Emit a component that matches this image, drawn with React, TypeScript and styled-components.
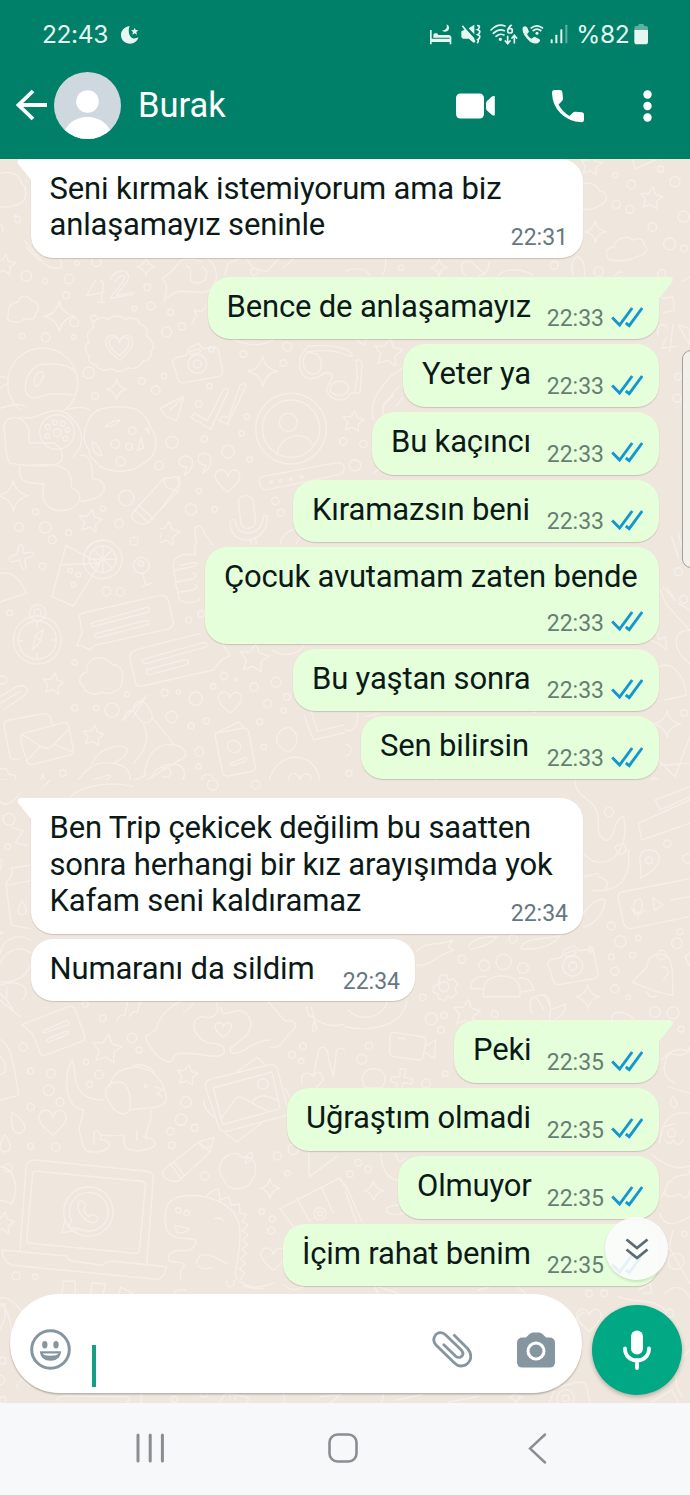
import React from 'react';
import styled, { createGlobalStyle } from 'styled-components';

const GlobalStyle = createGlobalStyle`
  html, body { margin: 0; padding: 0; }
  body { font-family: Roboto, 'Noto Sans', sans-serif; background: #efe6dd; }
  * { box-sizing: border-box; }
  svg { display: block; }
`;

const Screen = styled.div`
  position: relative;
  display: flex;
  flex-direction: column;
  width: 690px;
  height: 1495px;
  overflow: hidden;
`;

/* ---------- header ---------- */

const Header = styled.header`
  position: relative;
  z-index: 2;
  flex: none;
  height: 159px;
  background: #008069;
  color: #fff;
`;

const StatusBar = styled.div`
  display: flex;
  align-items: center;
  height: 68px;
  padding: 0 42px 0 42px;
  color: #e6f7f2;
  font: 400 24.5px/30px Inter, sans-serif;
`;

const Clock = styled.span`
  width: 79px;
  letter-spacing: -0.4px;
`;

const StatusIcons = styled.div`
  display: flex;
  align-items: center;
  margin-left: auto;
`;

const Battery = styled.span`
  margin: 0 4.5px 0 8px;
  letter-spacing: -0.3px;
`;

const AppBar = styled.div`
  display: flex;
  align-items: center;
  height: 74px;
  padding: 0 38px 0 16px;
`;

const Avatar = styled.div`
  width: 67px;
  height: 67px;
  margin-left: 7px;
  border-radius: 50%;
  overflow: hidden;
`;

const Contact = styled.h1`
  flex: 1;
  margin: 0 0 0 17px;
  font-size: 34.5px;
  line-height: 44px;
  font-weight: 400;
`;

const Glyph = styled.svg<{ $gap?: number; $drop?: number }>`
  flex: none;
  margin-left: ${(p) => p.$gap ?? 0}px;
  margin-top: ${(p) => p.$drop ?? 0}px;
`;

/* ---------- conversation ---------- */

const Chat = styled.main`
  position: relative;
  display: flex;
  flex-direction: column;
  flex: none;
  height: 1244px;
  background: #efe6dd;
`;

const Wallpaper = styled.svg`
  position: absolute;
  inset: 0;
`;

const Thread = styled.div`
  position: relative;
  display: flex;
  flex-direction: column;
  flex: none;
  height: 1135px;
  padding: 0 31px;
  margin-top: -0.5px;
`;

const Bubble = styled.div<{ $mine: boolean; $w: number; $h: number; $first: boolean; $tail: boolean }>`
  position: relative;
  flex: none;
  align-self: ${(p) => (p.$mine ? 'flex-end' : 'flex-start')};
  width: ${(p) => p.$w}px;
  height: ${(p) => p.$h}px;
  margin-top: ${(p) => (p.$first ? 0 : p.$tail ? 19 : 5)}px;
  padding: 12px 0 0 ${(p) => (p.$mine ? 19 : 18.5)}px;
  border-radius: 22px;
  ${(p) => p.$tail && (p.$mine ? 'border-top-right-radius: 0;' : 'border-top-left-radius: 0;')}
  background: ${(p) => (p.$mine ? '#e5ffdb' : '#fff')};
  box-shadow: 0 1px 1px rgba(90, 75, 60, 0.24);
`;

const Tail = styled.svg<{ $mine: boolean }>`
  position: absolute;
  top: 0;
  ${(p) => (p.$mine ? 'right: -14px;' : 'left: -14px; transform: scaleX(-1);')}
  fill: ${(p) => (p.$mine ? '#e5ffdb' : '#fff')};
`;

const Line = styled.div`
  color: #0b1a17;
  font-size: 31px;
  line-height: 36.5px;
  letter-spacing: -0.16px;
  white-space: nowrap;
`;

const Meta = styled.div<{ $mine: boolean }>`
  position: absolute;
  right: ${(p) => (p.$mine ? 16 : 15)}px;
  bottom: 7.5px;
  display: flex;
  align-items: center;
  color: ${(p) => (p.$mine ? '#667f74' : '#667781')};
  font-size: 23px;
  line-height: 24px;
  svg { margin: 0 0 4px 6.5px; }
`;

const ScrollThumb = styled.div`
  position: absolute;
  top: 191px;
  right: -10px;
  width: 18px;
  height: 218px;
  border: 1.5px solid #a3a09c;
  border-radius: 9px;
  background: #f3efeb;
`;

const JumpDown = styled.div`
  position: absolute;
  left: 605px;
  top: 1058px;
  z-index: 2;
  display: grid;
  place-items: center;
  width: 63px;
  height: 63px;
  border-radius: 50%;
  background: rgba(251, 252, 251, 0.9);
  box-shadow: 0 2px 3px rgba(0, 0, 0, 0.12);
`;

/* ---------- composer ---------- */

const Composer = styled.div`
  position: relative;
  display: flex;
  align-items: center;
  gap: 10px;
  padding-left: 9.5px;
  margin-top: -1px;
`;

const Field = styled.div`
  display: flex;
  align-items: center;
  width: 572px;
  height: 98.5px;
  padding: 12px 27px 0 20px;
  border-radius: 49px;
  background: #fff;
  box-shadow: 0 1.5px 1.5px rgba(60, 50, 40, 0.3);
`;

const Caret = styled.div`
  width: 4px;
  height: 42px;
  margin: 33px auto 0 21px;
  background: #14a085;
`;

const MicButton = styled.div`
  display: grid;
  place-items: center;
  width: 90px;
  height: 90px;
  margin-top: 12px;
  border-radius: 50%;
  background: #00a884;
  box-shadow: 0 2px 4px rgba(0, 0, 0, 0.25);
`;

const NavBar = styled.nav`
  position: relative;
  display: flex;
  align-items: center;
  flex: 1;
  padding: 0 0 2px 136px;
  background: #f6f8fa;
`;

/* ---------- wallpaper doodles (three units per pixel) ---------- */

const starPath = (x: number, y: number, r: number, turn = 0) => {
  const pts: string[] = [];
  for (let i = 0; i < 10; i++) {
    const a = ((turn - 90 + i * 36) * Math.PI) / 180;
    const q = i % 2 ? r * 0.5 : r;
    pts.push(`${(x + q * Math.cos(a)).toFixed(1)} ${(y + q * Math.sin(a)).toFixed(1)}`);
  }
  return `M${pts.join('L')}Z`;
};
const sparklePath = (x: number, y: number, r: number) => {
  const k = r * 0.2;
  return `M${x} ${y - r}Q${x + k * 0.6} ${y - k} ${x + r} ${y}Q${x + k} ${y + k * 0.6} ${x} ${y + r}Q${x - k * 0.6} ${y + k} ${x - r} ${y}Q${x - k} ${y - k * 0.6} ${x} ${y - r}Z`;
};
const heartPath = (x: number, y: number, s: number) =>
  `M${x} ${y + s}C${x - s * 0.5} ${y + s * 0.6} ${x - s * 1.2} ${y} ${x - s} ${y - s * 0.5}C${x - s * 0.8} ${y - s} ${x - s * 0.1} ${y - s} ${x} ${y - s * 0.3}C${x + s * 0.2} ${y - s} ${x + s * 0.9} ${y - s} ${x + s} ${y - s * 0.4}C${x + s * 1.1} ${y} ${x + s * 0.5} ${y + s * 0.6} ${x} ${y + s}Z`;

type Dots = [number, number, number][];
interface Patch {
  at: [number, number];
  size: [number, number];
  dots: Dots;
  stars?: Dots;
  sparkles?: Dots;
  hearts?: Dots;
  paths?: string[];
}

const camera = (x: number, y: number) =>
  `M${x - 60} ${y - 20}L${x - 32} ${y - 27}L${x - 26} ${y - 48}L${x + 4} ${y - 62}L${x + 16} ${y - 46}L${x + 50} ${y - 50}Q${x + 62} ${y - 50} ${x + 64} ${y - 38}L${x + 76} ${y + 20}Q${x + 78} ${y + 34} ${x + 62} ${y + 38}L${x - 40} ${y + 56}Q${x - 54} ${y + 58} ${x - 58} ${y + 44}L${x - 74} ${y - 4}Q${x - 74} ${y - 18} ${x - 60} ${y - 20}ZM${x - 22} ${y - 38}l28 -8q8 8 -2 12l-20 6q-8 0 -6 -10Z`;

const patches: Patch[] = [
  {
    at: [0, 155],
    size: [345, 255],
    dots: [[79, 363, 16], [135, 378, 8], [207, 372, 14], [231, 325, 7], [289, 320, 14], [442, 397, 10], [403, 461, 7], [453, 453, 12], [512, 472, 9], [198, 421, 10], [281, 490, 9], [223, 502, 13], [137, 547, 13], [66, 543, 8], [221, 546, 7], [500, 531, 15], [546, 514, 11], [266, 653, 17], [425, 678, 10], [467, 705, 13], [285, 723, 10], [763, 350, 11], [128, 684, 105]],
    stars: [[14, 330, 33]],
    sparkles: [[438, 335, 28], [178, 484, 46], [350, 703, 30]],
    hearts: [[358, 575, 40], [358, 572, 30]],
    paths: [
      'M0 56C30 45 62 60 64 84C86 98 80 150 46 150C30 158 10 156 0 154',
      'M44 180q22 8 16 20q-8 8 -16 -2Z M0 205q12 12 8 26',
      'M74 258L112 302M78 276L120 318M92 262l26 18M112 300C130 330 160 350 184 336C188 312 176 300 168 294',
      'M286 376L260 422L312 412M300 380q10 -6 10 6L304 442M292 442h22M330 376C340 346 378 338 386 362C390 384 352 408 350 422L402 412M344 380q26 -30 30 -12c0 14 -42 50 -42 62l68 -12',
      'M26 480C20 450 40 440 54 442C58 418 88 420 94 438C116 436 120 462 108 474C108 496 84 496 74 490C60 508 22 504 22 484',
      'M282 500C296 486 314 484 324 494C336 478 366 482 376 494C392 482 420 494 420 508C440 512 448 530 438 542C458 554 468 580 452 590C456 608 440 622 428 618C420 640 392 644 382 638C370 654 344 650 336 640C316 652 292 642 290 630C270 630 262 612 268 604C252 590 254 566 268 562C254 540 268 520 282 518Q276 508 282 500Z',
      'M76 706C74 650 110 624 140 628C180 620 220 640 224 650M76 706C84 736 114 730 130 722C170 708 200 724 226 718M104 690C98 670 112 646 128 652C138 662 124 672 118 688Q108 700 104 690Z M0 664L20 668M0 700L24 684M0 760C30 750 60 742 80 756M180 770C220 756 250 750 280 770C320 754 360 752 400 760L440 780',
      'M492 440C500 410 506 386 486 370C510 360 524 340 538 322C550 310 580 308 604 320M500 430C540 390 570 420 620 410C660 390 656 340 626 312M560 332C590 350 550 380 590 384C620 384 632 350 606 336',
      'M674 360L684 326L716 312M740 312L760 340L800 350L836 312M850 340L880 312',
      'M480 760L520 738M576 506L590 480L582 466L606 470L620 450',
    ],
  },
  {
    at: [345, 155],
    size: [345, 375],
    dots: [[947, 42, 9], [811, 61, 8], [859, 88, 13], [990, 80, 15], [814, 148, 12], [854, 163, 12], [1016, 185, 17], [922, 216, 13], [974, 266, 18], [1018, 280, 10], [628, 331, 12], [761, 350, 14], [168, 338, 8], [950, 356, 12], [1000, 665, 10], [996, 730, 12]],
    stars: [[919, 131, 35], [738, 30, 34]],
    sparkles: [[751, 230, 32], [282, 338, 26]],
    paths: [
      'M712 88C740 78 760 96 764 108C790 110 790 140 768 148C750 166 720 164 712 162',
      'M790 312C776 290 790 276 808 276C812 246 850 240 862 256C880 244 900 256 898 270C914 280 900 304 878 304C850 320 808 320 790 312Z',
      'M864 14L870 42L934 14M1010 380L1034 366M810 362q10 -14 22 -10M684 362C676 330 684 306 700 306C716 310 720 340 718 362M360 362C340 330 350 312 380 322L420 358M432 320C430 350 420 362 400 362M0 350C30 334 64 340 74 362M112 362Q124 340 122 310M460 362C480 336 540 340 562 362M950 430L984 426L988 466L956 472M940 540C930 510 960 500 966 520M964 546L950 580L1000 574M984 510L974 590M1000 510L1034 520L1034 570Z',
    ],
  },
  {
    at: [160, 330],
    size: [243, 215],
    dots: [[382, 50, 13], [370, 99, 10], [250, 72, 10], [116, 222, 10], [148, 168, 8], [36, 337, 18], [133, 327, 9], [261, 260, 8], [245, 310, 8], [204, 365, 19], [269, 388, 8], [117, 483, 8], [93, 538, 17], [164, 538, 8], [346, 513, 11], [362, 548, 10], [550, 334, 11], [610, 342, 11], [585, 406, 17], [393, 296, 106], [393, 296, 86], [385, 277, 27], [333, 457, 4], [362, 452, 4], [393, 447, 4], [425, 441, 4], [112, 102, 28], [112, 102, 12], [154, 58, 8], [12, 138, 8]],
    stars: [[685, 68, 45], [580, 275, 33], [22, 612, 38]],
    sparkles: [[308, 124, 45]],
    hearts: [[203, 450, 36]],
    paths: [
      camera(112, 102),
      'M350 374C360 310 440 300 458 344M306 440L530 398C556 396 560 426 538 434L326 478C300 484 290 450 306 440Z',
      'M92 262L104 250L142 272L190 180Q200 168 206 182L152 298ZM176 270L190 258L206 264L240 166Q252 156 258 168L202 284ZM0 236L72 198L50 272L20 260ZM30 240L64 208',
      'M82 412C50 410 50 380 76 378C104 380 106 410 74 436L80 410M138 406C108 404 104 372 134 370C160 372 160 410 128 430L138 404',
      'M236 520C230 490 276 490 280 516L286 570C288 600 246 604 242 578ZM210 576C210 630 260 640 290 622C330 600 320 560 322 556M214 570q10 -6 14 10C232 610 270 616 290 600C310 590 306 570 310 558q10 -6 12 4M272 626L276 660M286 622L292 660',
      'M430 66C410 90 415 140 450 146C484 146 490 120 510 130C530 140 500 160 500 180C510 214 560 220 570 190L600 188L606 100Q600 84 588 92L592 140L584 184M430 66L444 48C500 44 560 46 578 76Q570 82 560 76C530 60 480 60 440 66L470 72C490 90 490 130 460 132C430 130 420 90 440 72M510 180C510 150 550 144 566 168C570 200 520 206 510 180',
      'M104 600C110 580 130 586 132 610L170 660M104 600L112 660M0 540L60 460L50 440L10 446M360 650C360 610 400 590 430 600L410 640M640 430L666 410L690 434M640 270C630 220 640 200 690 140L730 112M666 230L716 170M670 250C664 220 680 220 700 196M710 226L734 196M730 240L754 206M220 28Q290 60 340 28M590 28L612 46L620 28',
    ],
  },
  {
    at: [0, 410],
    size: [345, 370],
    dots: [[172, 68, 12], [143, 50, 7], [164, 38, 7], [188, 41, 7], [202, 60, 7], [196, 86, 7], [142, 78, 7], [171, 66, 52], [477, 167, 13], [379, 264, 23], [107, 305, 9], [57, 351, 13], [136, 352, 17], [157, 389, 12], [206, 368, 9], [309, 296, 8], [357, 341, 13], [402, 394, 12], [128, 469, 10], [424, 466, 24], [423, 461, 8], [319, 544, 13], [361, 546, 12], [308, 448, 58], [308, 448, 40], [211, 482, 7], [235, 494, 7], [221, 524, 7], [113, 608, 24], [113, 608, 11], [112, 690, 72], [112, 690, 57], [29, 608, 9], [8, 810, 12], [224, 757, 8], [381, 853, 8], [494, 848, 10], [535, 846, 6], [587, 866, 20], [289, 894, 8], [224, 893, 9], [336, 900, 21], [515, 921, 17], [573, 947, 9], [619, 933, 9], [566, 630, 9], [672, 798, 11], [640, 829, 8], [707, 809, 4], [762, 831, 13], [828, 817, 15], [861, 861, 10], [803, 881, 12], [851, 901, 8], [779, 935, 9], [791, 1011, 8], [598, 1025, 13], [596, 1070, 8], [623, 1111, 18], [718, 1132, 7], [768, 1121, 11], [1004, 1122, 9], [188, 1089, 10], [15, 1127, 18], [604, 612, 10], [346, 102, 13], [397, 62, 11], [387, 110, 10], [362, 154, 14]],
    stars: [[271, 334, 36], [160, 822, 33], [280, 978, 33], [762, 746, 46]],
    sparkles: [[40, 257, 46], [128, 1136, 44]],
    hearts: [[690, 875, 34], [900, 1120, 34]],
    paths: [
      'M268 120C240 90 256 50 270 20C290 -4 320 -10 350 -6C400 -20 440 10 450 50C480 90 470 140 430 160C400 190 340 190 300 170C290 150 264 150 268 120ZM316 50q20 -20 44 -20q-10 20 -44 20ZM276 96q16 0 30 40q-30 0 -30 -40ZM424 84l6 30l-18 8ZM436 56q8 -10 12 14Z',
      'M12 60C10 20 50 14 70 34C100 60 80 80 90 100L160 98C180 110 190 120 186 150C170 174 100 170 30 160C10 130 20 90 12 60ZM62 20C110 40 150 -20 200 10C250 50 260 100 220 140M60 170C50 220 90 220 130 222M90 166C180 156 220 170 214 234C250 240 250 290 200 300C140 310 120 270 132 222M240 136C270 130 280 170 276 206C330 206 330 270 242 274',
      'M396 310L490 206L540 200L534 244L444 338C420 350 390 330 396 310ZM490 206L498 232L534 244M416 286L460 326M404 300L446 338',
      'M30 440l22 -8l4 -22q8 -14 12 0l2 20l26 -4q14 8 -2 14l-20 6l4 24q-6 12 -14 0l-4 -20l-26 6q-10 -10 -4 -16Z',
      'M198 406L300 460L220 588L156 560ZM180 464L300 460M308 410V486M270 448H346M282 420L336 474M336 420L280 474M260 420C270 396 300 390 318 392M428 490L438 526M426 530L454 520',
      'M0 490C40 480 60 510 80 550L0 576',
      'M240 628C230 614 250 608 260 606L480 556C500 554 504 566 506 576L520 636C520 650 510 656 500 658L284 706L270 720L244 706L230 708L246 670ZM272 640L440 592Q456 594 446 606L284 648Q268 652 272 640ZM284 672L434 632Q452 630 444 644L296 682Q280 684 284 672Z',
      'M390 746C386 730 400 722 412 718L600 670M390 746L406 816Q410 832 426 828L640 780L664 750L690 736L660 690M430 748L610 698Q626 698 620 710L440 760Q420 762 430 748ZM440 780L550 750Q572 748 562 764L450 794Q434 794 440 780Z',
      'M98 720L106 676L130 658L120 696ZM108 680L122 692M112 634V650M112 730V746M54 692H68M154 690H168',
      'M522 480C510 436 550 430 586 434L584 405M522 480C522 500 530 500 526 520C540 550 530 560 540 572C560 580 590 580 600 566M526 480L580 470Q600 456 580 458L540 466M530 516L580 506Q598 494 580 490M540 546L580 540Q600 530 584 524',
      'M260 786C240 790 230 820 250 826C250 850 290 860 306 846C340 860 370 830 366 810C376 780 350 760 336 764C320 736 260 730 260 786Z',
      'M0 860L50 830C80 820 90 840 76 854L10 900M0 880L60 844M12 946Q10 934 26 930L136 910Q150 912 156 940M12 946L30 1040Q34 1052 60 1046M64 972L190 938Q204 936 206 950L220 1020Q220 1034 206 1036L96 1064Q84 1064 80 1052L62 990ZM64 972L130 1014L150 1014L204 960M80 1052L120 1010M216 1024L164 1004',
      'M400 904C400 870 430 860 450 900C470 930 440 950 420 930ZM366 930C380 920 370 900 400 900M370 930L440 856L400 920M430 942C450 980 440 1020 400 1060M456 922L520 1000M276 1060C300 1010 360 1000 380 1014C390 1030 360 1050 340 1060M222 1160C230 1080 290 1050 340 1060C400 1070 400 1110 370 1150M280 1110L320 1096Q340 1096 326 1106L290 1118Q274 1118 280 1110ZM432 1100C440 1040 460 1010 500 1004C540 1000 560 1020 556 1040L440 1110M456 1100C470 1060 540 1050 552 1080C560 1120 520 1144 480 1134M484 1074q26 -6 30 14q-8 20 -26 12M390 1116L440 1094',
      'M646 970L730 954Q744 954 746 966L766 1070Q766 1082 756 1084L684 1098Q672 1098 668 1088L646 980ZM646 970L716 936L730 950M682 1010C682 980 720 990 722 1010C720 1032 690 1034 684 1014M692 1060L736 1042Q744 1046 736 1054L700 1066Q688 1068 692 1060Z',
      'M832 1000C824 970 850 950 870 954C900 970 896 1010 866 1026Q846 1020 832 1000ZM808 1140C800 1090 840 1040 890 1042C950 1046 970 1110 954 1150Q880 1170 814 1150Z',
      'M912 914L940 990L1034 968M934 906L952 964L1034 944M0 1076L20 1076L26 1092L46 1096L48 1116L64 1124L60 1150M820 720C850 746 900 730 910 706M650 1160q20 -20 50 0',
    ],
  },
  {
    at: [345, 530],
    size: [345, 250],
    dots: [[1000, 125, 12], [1016, 208, 12], [1018, 549, 10], [928, 752, 9], [12, 730, 9], [0, 660, 18], [830, 780, 54]],
    stars: [[268, 780, 38]],
    sparkles: [[966, 582, 40]],
    paths: [
      'M946 180L964 224L1034 300M954 172L990 210M966 172L984 200M1034 240L1000 220M916 330L934 300L942 330L962 320L964 360L940 340ZM1034 300C980 300 980 360 1034 400M944 410C980 390 1020 440 1024 496L960 510M980 20L1000 84M1000 10L1010 50M940 690L990 740L1034 620M950 706L1034 700M0 600C30 610 40 580 38 550M60 560L100 552M560 546h14M24 800V770Q26 758 40 758L150 766Q176 770 180 800M450 800Q446 760 460 746M520 800L620 774L630 800M640 746L670 800M784 780H880M830 728V800M800 740Q830 770 810 800',
    ],
  },
  {
    at: [0, 780],
    size: [345, 220],
    dots: [[27, 118, 18], [23, 200, 9], [638, 15, 16], [767, 14, 13], [256, 672, 10]],
    paths: [
      'M34 142L70 152L46 188L82 196M0 236Q10 240 0 270M36 284L34 264L90 256M36 284L18 310L34 436L92 446M18 316L92 302M66 362C50 390 50 406 70 404Q88 398 66 362ZM0 456q20 0 0 6M0 520C10 470 60 460 92 480M0 550C20 500 70 500 92 520M0 606C60 610 80 580 92 556M0 616C40 600 80 610 78 640C70 670 40 690 0 690M0 640L70 710M20 620V672L60 690M0 670L40 680M370 716L380 670L420 676M400 716L414 680M440 716C450 690 480 670 520 664M560 700C580 670 640 660 656 700M660 700C680 660 740 670 750 716M820 680L870 720M920 700L930 664L950 690M130 20L150 0M210 50C240 20 330 0 400 20M60 40Q20 90 0 64',
    ],
  },
  {
    at: [345, 780],
    size: [345, 370],
    dots: [[792, 96, 14], [967, 191, 11], [1028, 236, 14], [912, 241, 10], [799, 438, 12], [826, 484, 17], [880, 474, 8], [996, 490, 16], [1005, 455, 9], [799, 530, 9], [810, 626, 12], [863, 526, 9], [810, 574, 12], [850, 652, 7], [930, 696, 16], [984, 698, 18], [1008, 747, 9], [351, 538, 12], [233, 652, 10], [259, 716, 18], [297, 706, 9], [288, 750, 10], [72, 798, 11], [50, 838, 15], [301, 881, 8], [243, 910, 13], [449, 702, 10], [504, 477, 12], [476, 546, 23], [418, 556, 16], [534, 564, 16], [683, 558, 30], [683, 558, 12], [738, 508, 8], [297, 620, 15], [980, 1060, 12], [950, 525, 14]],
    stars: [[365, 700, 42]],
    sparkles: [[728, 650, 36]],
    paths: [
      camera(683, 558),
      'M416 650C410 600 440 586 476 588C520 590 530 620 524 650ZM378 626C376 596 400 586 424 590M378 626H412M566 630C560 600 540 590 520 594M530 636L566 630',
      'M286 584L306 586L310 600L326 596L338 612L328 626L336 640L320 654L306 650L300 662L280 656V642L264 636L266 618L280 614Z',
      'M716 220C760 280 860 240 836 110C800 120 810 190 780 180C740 160 780 110 740 70C720 50 690 40 690 0M716 290L760 280M740 330C820 340 860 300 850 210M810 200q30 -20 34 10q-24 30 -34 -10M760 290q40 10 20 40',
      'M880 130L1034 60M880 130L890 180L1034 130M930 60L1034 20M930 60L946 90L1034 50',
      'M884 240C880 200 940 200 942 232C946 260 910 280 886 296Q890 260 884 240ZM830 336Q816 342 820 356L836 430Q842 446 856 446L1034 410M830 336L1034 296M866 372Q880 346 892 366L890 390Q878 406 866 390ZM860 384Q870 420 900 390M880 400V416M924 354L954 374L928 392ZM978 360L1034 350',
      'M716 400C740 360 780 350 780 364C780 400 740 440 716 440M862 606L906 560C906 530 930 516 964 526C990 550 980 600 984 646L930 634ZM906 636Q916 660 936 646M950 560Q970 560 970 580L956 600M1034 520L1020 530L1034 560',
      'M560 700C550 670 556 650 570 652C584 660 590 680 596 690M572 650C590 640 600 640 616 680M596 644Q624 650 614 716M616 690L662 672Q660 710 630 716M800 716C800 690 840 690 864 716M528 500C550 470 600 480 646 466C620 500 580 510 530 506ZM370 500C380 480 420 466 456 470Q430 500 374 508M214 516C240 480 280 500 324 480L310 500L326 512C280 520 260 560 214 556',
      'M136 766Q136 756 150 758L230 770Q246 772 242 784L236 826Q232 842 220 840L146 830Q132 826 134 816ZM240 800L272 780L268 836L242 818M160 774l20 2M52 900C50 870 80 860 106 870C130 890 120 910 110 924L60 924ZM140 890l24 2l2 -26l16 2l-4 24l26 6l-4 14l-26 -4l-4 20l-16 -2l2 -18l-20 -4Z',
      'M0 740C80 756 170 740 186 664M10 690C50 730 120 710 126 664M950 840C1000 780 1034 830 1034 800M1034 810C1000 850 970 790 960 850C950 880 970 900 990 910M970 920L1034 940M984 950C970 970 976 980 990 984Q1004 970 984 950M944 1090C950 1020 980 990 1034 1000M960 1080q10 20 26 0q10 26 30 0M960 1040L990 1030',
    ],
  },
  {
    at: [0, 1000],
    size: [345, 280],
    dots: [[308, 55, 10], [256, 12, 9], [396, 114, 14], [417, 150, 9], [70, 141, 12], [92, 213, 9], [153, 221, 13], [146, 271, 16], [180, 306, 12], [258, 186, 8], [297, 224, 13], [268, 253, 9], [92, 321, 11], [92, 439, 9], [167, 441, 13], [558, 306, 16], [543, 359, 17], [584, 383, 10], [511, 394, 11], [515, 436, 10], [614, 528, 12], [832, 468, 12], [880, 448, 16], [862, 520, 8], [909, 139, 10], [876, 164, 10], [904, 183, 8], [789, 252, 16], [785, 635, 8], [817, 657, 9], [814, 692, 10], [535, 631, 8], [560, 639, 8], [437, 259, 4], [48, 828, 12], [105, 830, 8], [960, 641, 18], [960, 641, 7], [265, 635, 74], [24, 504, 12]],
    stars: [[320, 148, 46], [562, 226, 33], [10, 670, 34]],
    sparkles: [[810, 565, 30]],
    hearts: [[670, 88, 24], [158, 365, 40], [820, 775, 36]],
    paths: [
      'M66 74L206 20Q220 16 226 30L254 108Q256 120 246 124L134 166Q124 168 120 158L98 102ZM130 92L200 62Q212 64 204 74L136 98Q124 98 130 92ZM140 118L196 94Q210 94 202 104L146 126Q134 126 140 118Z',
      'M468 90C480 30 540 0 560 0M468 90L436 110C440 130 480 190 510 186C524 180 520 160 530 162C590 150 650 184 672 160C680 130 640 130 620 128C570 100 570 50 610 50C640 60 660 40 650 10M690 146C690 170 720 160 760 134Q790 120 810 120M690 146L740 106C770 60 740 30 710 32C680 40 660 50 664 20M810 140C850 150 850 110 880 90C900 64 870 60 854 62L800 0M550 40L580 12',
      'M218 180C230 220 210 300 310 300M218 180C190 220 190 320 250 330C250 360 230 380 240 400C250 430 240 460 290 456C340 450 340 420 300 418C310 400 280 380 282 400V430M330 264C330 220 370 200 420 202C470 210 500 260 498 300C490 330 430 320 390 330M350 246C310 250 310 290 330 310C350 350 390 350 390 320C394 280 380 240 350 246ZM300 404Q340 410 370 404L374 440Q400 460 440 448C480 440 470 416 430 410M410 390V420M452 330C460 370 430 390 440 420M464 260L490 268L470 280L486 290M400 196C430 190 450 200 464 218',
      'M630 238L810 194Q826 192 832 206L864 330Q866 344 854 348L680 394Q664 396 658 384L616 260Q614 244 630 238ZM640 264L816 216L840 326L668 374ZM662 356L708 294Q724 286 736 298L800 332M758 304C780 280 800 284 836 304M710 216L772 172L796 196M856 264L868 290M612 300Q606 320 640 350M676 400L710 426L784 370',
      'M490 510L596 426L642 412L630 456L540 540C510 552 480 530 490 510ZM596 426L630 456M510 490L544 536M520 484L554 528M594 424L610 446L632 438',
      'M720 464C690 450 656 480 658 510C660 530 676 540 680 556C700 570 730 570 748 552C770 530 776 490 750 474L720 470M738 490C734 466 750 456 756 456Q762 480 738 490Z',
      'M60 752L78 502Q82 480 104 480L440 514Q460 516 460 536L440 792M80 720L98 524Q98 512 112 514L424 544Q438 546 436 558L418 752Q416 762 404 760L90 730Q80 728 80 720ZM6 750L200 768Q206 782 220 784L310 796Q316 784 340 784L498 800Q494 836 470 838L40 796Q10 790 6 750Z',
      'M196 656Q190 676 186 698L230 692M214 660A58 58 0 1 1 240 687L206 682L214 660M236 606Q230 620 240 640Q256 666 284 668Q300 656 290 648L276 644L266 650Q254 640 252 626L258 614L246 602Z',
      'M500 690C490 650 490 600 540 590C600 576 720 600 720 700C720 800 690 820 720 850M500 690C520 724 560 710 588 720C590 740 570 756 550 752C520 750 500 760 506 780C520 796 540 776 554 796C530 820 540 860 580 870M590 790C590 760 620 760 640 770L684 792M594 796Q604 810 634 804M524 676L568 686Q550 704 530 696ZM620 588Q636 570 656 568L660 600L686 590L694 616L718 612L720 640L740 644L726 664L744 676L726 692L744 704L728 720L742 734L726 748L740 760L722 776L736 790L718 806L734 820L720 840M644 656q16 -8 26 6',
      'M36 336C30 380 40 400 60 400C90 390 70 360 36 336ZM14 404C0 430 -6 450 10 456C40 454 34 430 14 404ZM0 118C30 130 40 180 56 286L0 300M0 170C24 190 20 220 0 224M0 500C40 500 60 560 36 610L0 600',
      'M906 250C900 220 920 210 940 230L956 150C970 130 986 150 984 170L1000 230L1010 150Q1020 140 1034 150M940 230Q960 200 970 240L950 262M928 530L926 460M928 530L1010 470M840 626L1020 534L1034 560M840 626L880 680M890 594L930 666M966 564L1000 640M934 20L944 60C930 100 940 100 950 84L940 50Q920 50 920 20M950 60C980 80 1020 80 1034 70M352 60Q360 40 374 46L384 0M388 50Q400 30 412 36L422 0M0 0L60 50M20 0L40 30',
    ],
  },
  {
    at: [345, 1150],
    size: [345, 253],
    dots: [[40, 38, 10], [69, 58, 10], [15, 72, 10], [994, 334, 24], [1018, 252, 8], [732, 430, 10], [778, 430, 10], [974, 490, 12], [662, 745, 26], [662, 745, 10]],
    sparkles: [[86, 122, 30], [512, 742, 20]],
    hearts: [[732, 508, 36]],
    paths: [
      'M0 120L34 216M0 100L50 214M108 12C110 60 130 90 160 90M152 10Q160 50 180 24M124 182C124 166 160 162 174 170M124 182Q130 200 180 190M950 140C970 110 960 100 980 90C1010 60 1034 90 1034 60M920 12C960 50 1000 60 1034 48M956 130Q980 150 1000 130Q1030 160 1034 120M944 190C960 240 1000 220 1034 200M970 300L984 240M960 270L1034 400M820 440C860 460 920 440 960 480M880 420L916 400L920 430L896 430M960 430Q1000 390 1034 440M0 340C20 360 60 350 100 430M100 410L160 430M400 420L430 412M520 412L540 430M1034 600C990 640 980 690 1010 740M920 756L980 720L1000 756M110 756L116 734M156 750L230 734M310 756L400 740M614 756L630 714L700 696Q720 694 726 710L734 756M720 490C690 480 680 560 712 590',
    ],
  },
  {
    at: [0, 1280],
    size: [345, 123],
    dots: [[8, 242, 10], [0, 300, 14], [8, 360, 10], [523, 358, 9], [612, 340, 12], [691, 8, 12]],
    paths: [
      'M0 54C30 50 60 80 74 110M0 70C20 80 40 130 30 180M0 80L14 70L16 110L0 150M50 320L66 296L90 320M170 360Q180 344 220 348L380 350Q400 356 380 366M424 340V370M660 366L676 340L740 350Q750 360 740 368M690 340V356M706 342V360M850 340Q860 360 846 370M960 350L1020 344L990 370M186 42L190 4L226 4L226 42M272 42L276 8L316 12L310 42M356 42L362 20L400 42M520 42Q530 24 556 30M720 4Q760 36 824 8M730 18L760 26L790 26M852 14Q880 40 910 20',
    ],
  },
];

const Doodles = () => (
  <Wallpaper width="690" height="1244" viewBox="0 159 690 1244">
    <defs>
      {patches.map((p, i) => (
        <clipPath id={`patch${i}`} key={i}>
          <rect width={p.size[0] * 3} height={p.size[1] * 3} />
        </clipPath>
      ))}
    </defs>
    {patches.map((p, i) => (
      <g
        key={i}
        transform={`translate(${p.at[0]} ${p.at[1]}) scale(0.33333)`}
        clipPath={`url(#patch${i})`}
        fill="none"
        stroke="#f6efe9"
        strokeWidth="4.3"
        strokeLinejoin="round"
        strokeLinecap="round"
      >
        {p.dots.map(([x, y, r], k) => <circle key={k} cx={x} cy={y} r={r} />)}
        {p.stars?.map(([x, y, r], k) => <path key={k} d={starPath(x, y, r, 8)} />)}
        {p.sparkles?.map(([x, y, r], k) => <path key={k} d={sparklePath(x, y, r)} />)}
        {p.hearts?.map(([x, y, r], k) => <path key={k} d={heartPath(x, y, r)} />)}
        {p.paths?.map((d, k) => <path key={k} d={d} />)}
      </g>
    ))}
  </Wallpaper>
);

/* ---------- data ---------- */

interface Message {
  lines: string[];
  time: string;
  w: number;
  mine?: boolean;
  tail?: boolean;
  h?: number;
}

const messages: Message[] = [
  { lines: ['Seni kırmak istemiyorum ama biz', 'anlaşamayız seninle'], time: '22:31', w: 552, tail: true, h: 99.2 },
  { lines: ['Bence de anlaşamayız'], time: '22:33', w: 451.5, mine: true, tail: true },
  { lines: ['Yeter ya'], time: '22:33', w: 256, mine: true },
  { lines: ['Bu kaçıncı'], time: '22:33', w: 287, mine: true },
  { lines: ['Kıramazsın beni'], time: '22:33', w: 366, mine: true },
  { lines: ['Çocuk avutamam zaten bende'], time: '22:33', w: 454, mine: true, h: 96.3 },
  { lines: ['Bu yaştan sonra'], time: '22:33', w: 366, mine: true },
  { lines: ['Sen bilirsin'], time: '22:33', w: 298, mine: true },
  { lines: ['Ben Trip çekicek değilim bu saatten', 'sonra herhangi bir kız arayışımda yok', 'Kafam seni kaldıramaz'], time: '22:34', w: 552, tail: true, h: 135.7 },
  { lines: ['Numaranı da sildim'], time: '22:34', w: 384 },
  { lines: ['Peki'], time: '22:35', w: 205, mine: true, tail: true },
  { lines: ['Uğraştım olmadi'], time: '22:35', w: 372, mine: true },
  { lines: ['Olmuyor'], time: '22:35', w: 261, mine: true },
  { lines: ['İçim rahat benim'], time: '22:35', w: 376, mine: true },
];

const Ticks = () => (
  <svg width="32.5" height="21" viewBox="0 0 32.5 21" fill="none" stroke="#1496cf" strokeWidth="2.9">
    <path d="M1.2 10.5L8.6 18L21.2 1" />
    <path d="M14.8 16L18.2 18.6L31.2 1" />
  </svg>
);

const MessageBubble = ({ m, first }: { m: Message; first: boolean }) => (
  <Bubble $mine={!!m.mine} $w={m.w} $h={m.h ?? 62.7} $first={first} $tail={!!m.tail}>
    {m.tail && (
      <Tail $mine={!!m.mine} width="14.5" height="22" viewBox="0 0 14.5 22">
        <path d="M0 0H11Q15.5 1 13 5.2L0 21.5Z" />
      </Tail>
    )}
    {m.lines.map((l) => <Line key={l}>{l}</Line>)}
    <Meta $mine={!!m.mine}>
      {m.time}
      {m.mine && <Ticks />}
    </Meta>
  </Bubble>
);

const Status = () => (
  <StatusBar>
    <Clock>22:43</Clock>
    <Glyph width="18" height="19" viewBox="0 0 54 57" fill="#e6f7f2">
      <path d="M26 3C8 6 0 18 0 30C0 46 12 56 27 56C40 56 50 48 52 36C44 42 34 42 29 35C22 26 22 12 26 3Z" />
      <path d="M41 8l3 7l8 1l-6 5l2 8l-7 -4l-7 4l2 -8l-6 -5l8 -1Z" />
    </Glyph>
    <StatusIcons>
      <Glyph width="22" height="21" viewBox="256 71 66 63" fill="#e6f7f2">
        <path d="M256 89h5v26h54v-6h5v23h-5v-7h-54v7h-5ZM266 112v-8q0 -5 5 -5h6q3 2 3 5h34q5 1 5 8ZM306 72Q318 78 311 90Q303 98 292 91Q310 90 306 72Z" />
      </Glyph>
      <Glyph $gap={9} width="20" height="21" viewBox="348 71 60 63" fill="#e6f7f2">
        <path d="M349 93l8 -4h8l23 25v15l-17 -14h-16q-6 -2 -6 -6ZM371 84L388 73V102Z" />
        <path d="M352 76L390 124" stroke="#e6f7f2" strokeWidth="5" />
        <path d="M396 76q9 -1 7 5t-5 7q8 3 6 8t-6 7q8 3 6 8t-6 7q5 5 -2 10" fill="none" stroke="#e6f7f2" strokeWidth="5" />
      </Glyph>
      <Glyph $gap={9} width="28" height="21" viewBox="434 71 84 63" fill="none" stroke="#e6f7f2" strokeWidth="5" strokeLinecap="round">
        <path d="M437 89Q457 68 479 77M444 99Q460 84 477 91M452 108Q464 98 476 104" />
        <path d="M498 75Q488 80 487 90M494 84a7 7 0 1 1 0 14a7 7 0 1 1 0 -14" />
        <circle cx="465" cy="117" r="2.5" fill="#e6f7f2" />
        <path d="M487 108v21M480 122l7 8l7 -8M507 128v-21M500 113l7 -8l7 8" />
      </Glyph>
      <Glyph $gap={4} width="22" height="21" viewBox="527 71 66 63" fill="#e6f7f2">
        <path d="M530 80q8 -6 13 2l5 12l-6 8q4 8 13 13l9 -6l13 6q8 4 1 11q-9 8 -27 -2Q523 99 530 80Z" />
        <path d="M553 84Q572 69 590 84M559 92Q572 81 585 92" fill="none" stroke="#e6f7f2" strokeWidth="5" />
        <circle cx="572" cy="99" r="4.5" />
      </Glyph>
      <Glyph $gap={6} width="18" height="21" viewBox="611 71 54 63" fill="#e6f7f2">
        <rect x="613" y="117" width="6" height="12" rx="2" />
        <rect x="627" y="103" width="6" height="26" rx="2" />
        <rect x="642" y="87" width="6" height="42" rx="2" />
        <rect x="657" y="73" width="6" height="56" rx="2" opacity=".4" />
      </Glyph>
      <Battery>%82</Battery>
      <Glyph width="14" height="21" viewBox="0 0 42 63" fill="#e6f7f2">
        <path d="M1 18V12q0 -6 6 -6h6V3q0 -3 4 -3h9q4 0 4 3V6h6q6 0 6 6v6Z" opacity=".4" />
        <path d="M1 18h41v35q0 8 -8 8H9q-8 0 -8 -8Z" />
      </Glyph>
    </StatusIcons>
  </StatusBar>
);

export default function App() {
  return (
    <Screen>
      <GlobalStyle />
      <Header>
        <Status />
        <AppBar>
          <Glyph width="31" height="32" viewBox="0 0 31 32" fill="none" stroke="#fff" strokeWidth="3.8">
            <path d="M2 16H31M17 2L2.5 16L17 30" />
          </Glyph>
          <Avatar>
            <svg width="67" height="67" viewBox="0 0 67 67">
              <rect width="67" height="67" fill="#cfd8df" />
              <circle cx="33.5" cy="29.5" r="11.3" fill="#fff" />
              <path d="M9 67C10 51 23 45 33.5 45S57 51 58 67Z" fill="#fff" />
            </svg>
          </Avatar>
          <Contact>Burak</Contact>
          <Glyph $drop={2} width="39" height="26" viewBox="0 0 39 26" fill="#fff">
            <rect x="0" y="0.5" width="28" height="25" rx="4.5" />
            <path d="M30 10.5Q30 9 31 8L36 3.5Q37 2.8 38.8 3.2V22.2Q37 22.8 36 22L31 17.5Q30 16.5 30 15Z" />
          </Glyph>
          <Glyph $gap={56} $drop={2} width="34" height="34" viewBox="0 0 34 34" fill="#fff">
            <path d="M3.5 1H9Q11 1 11.3 3Q11.7 6.5 12 9.5Q12 11 11 12L7.5 15.5Q11.5 23 18.5 27L22 23.5Q23.2 22.5 24.5 22.7L31 23.3Q33 23.7 33 25.5V31Q33 33.3 30.5 33.3Q18 32.7 9.5 24.3Q1.3 16 1 4Q1 1 3.5 1Z" />
          </Glyph>
          <Glyph $gap={58} $drop={1} width="9" height="32" viewBox="0 0 9 32" fill="#fff">
            <circle cx="4.5" cy="4.5" r="4.2" />
            <circle cx="4.5" cy="16" r="4.2" />
            <circle cx="4.5" cy="27.5" r="4.2" />
          </Glyph>
        </AppBar>
      </Header>

      <Chat>
        <Doodles />
        <ScrollThumb />
        <Thread>
          {messages.map((m, i) => <MessageBubble key={i} m={m} first={i === 0} />)}
        </Thread>
        <JumpDown>
          <svg width="24" height="22" viewBox="0 0 24 22" fill="none" stroke="#5b6b72" strokeWidth="2.8">
            <path d="M1.5 1.5L12 10L22.5 1.5M1.5 11.5L12 20L22.5 11.5" />
          </svg>
        </JumpDown>
        <Composer>
          <Field>
            <Glyph width="41" height="41" viewBox="0 0 41 41" fill="#8696a0">
              <circle cx="20.5" cy="20.5" r="18.8" fill="none" stroke="#8696a0" strokeWidth="3" />
              <ellipse cx="14.8" cy="15.8" rx="2.7" ry="3.7" />
              <ellipse cx="26" cy="15.8" rx="2.7" ry="3.7" />
              <path d="M9.8 22.3H31.2Q30.5 31.8 20.5 31.8T9.8 22.3ZM12.7 24.5Q14 26.7 20.5 26.7T28.5 24.5Z" fillRule="evenodd" />
            </Glyph>
            <Caret />
            <Glyph width="40" height="37" viewBox="0 0 40 37" fill="none" stroke="#8696a0" strokeWidth="2.8">
              <path d="M21.5 3.5L35.5 17.5C42 25 38 35 28.5 35Q25.5 35 22.5 32L4 14C-1 8.5 3.5 1.7 8.5 1.7Q11.5 1.7 14 4.2L29 18.7C34 24 27.5 28.5 24 25.5L11 13" />
            </Glyph>
            <Glyph $gap={45} width="38" height="36" viewBox="0 0 38 36" fill="#8696a0">
              <path d="M12.5 2Q14 .5 16 .5H22Q24 .5 25.5 2L29 5.500H32Q38 5.500 38 11V30Q38 35.500 32.500 35.500H5.500Q0 35.500 0 30V11Q0 5.500 6 5.500H9Z" />
              <circle cx="19" cy="19" r="8" fill="none" stroke="#fff" strokeWidth="3" />
            </Glyph>
          </Field>
          <MicButton>
            <svg width="28" height="40" viewBox="0 0 28 40" fill="none" stroke="#fff" strokeWidth="3.8">
              <rect x="8" y=".5" width="12" height="24" rx="6" fill="#fff" stroke="none" />
              <path d="M2 18.500C2 34.500 26 34.500 26 18.500M14 30V38" strokeLinecap="round" />
            </svg>
          </MicButton>
        </Composer>
      </Chat>

      <NavBar>
        <Glyph width="28" height="30" viewBox="0 0 28 30" stroke="#8b8d90" strokeWidth="3" strokeLinecap="round">
          <path d="M2 2V28M14.200 2V28M26.400 2V28" />
        </Glyph>
        <Glyph $gap={164} width="30" height="30" viewBox="0 0 30 30" fill="none" stroke="#8b8d90" strokeWidth="2.6">
          <rect x="1.5" y="1.5" width="27" height="27" rx="8" />
        </Glyph>
        <Glyph $gap={169.5} width="19" height="31" viewBox="0 0 19 31" fill="none" stroke="#8b8d90" strokeWidth="2.4" strokeLinecap="round">
          <path d="M17 1.5L2 15.5L17 29.5" />
        </Glyph>
      </NavBar>
    </Screen>
  );
}
